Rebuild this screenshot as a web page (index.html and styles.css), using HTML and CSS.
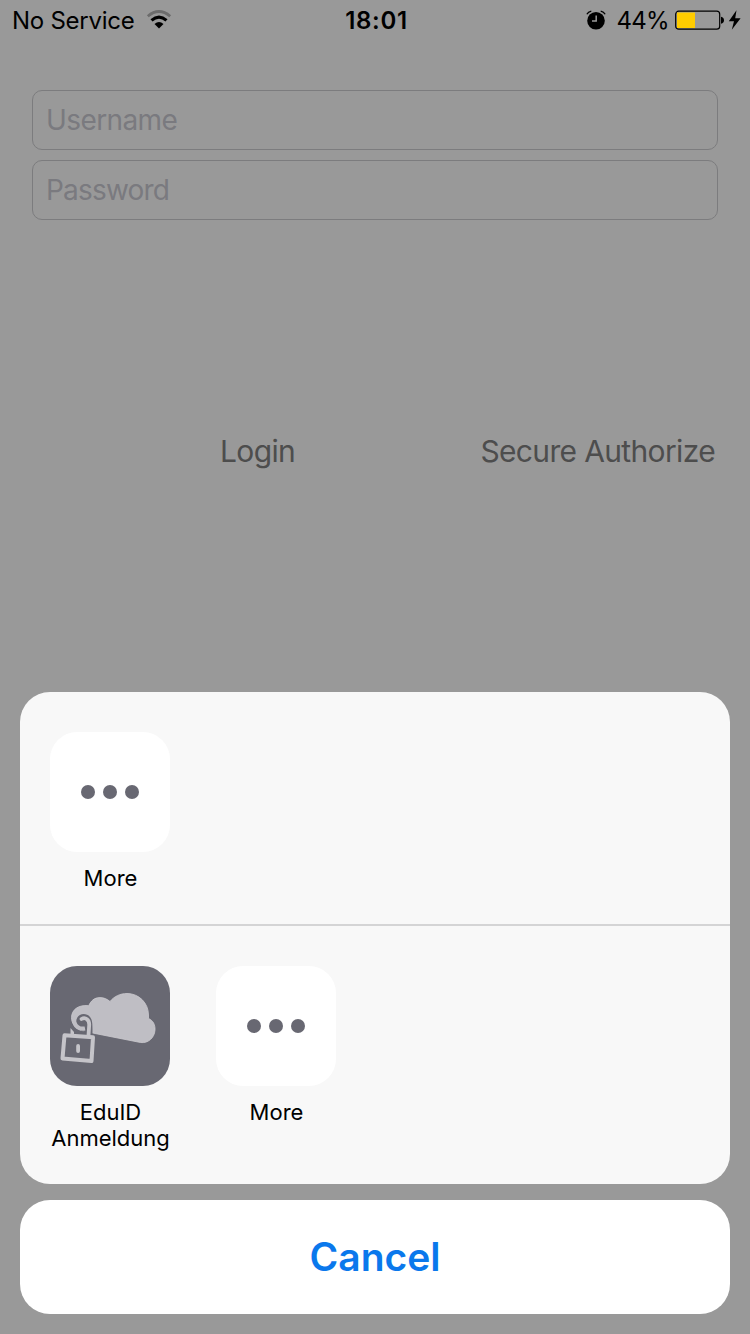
FILE: index.html
```html
<!DOCTYPE html>
<html lang="en">
<head>
<meta charset="utf-8">
<title>Share</title>
<link rel="stylesheet" href="styles.css">
</head>
<body>
<header class="status">
  <div class="status-left">
    <span class="carrier">No Service</span>
    <svg class="wifi" width="26" height="20" viewBox="0 0 26 20">
      <path d="M1.8 6.2Q13 -3.2 24.2 6.2" fill="none" stroke="#6c6c6c" stroke-width="2.8"/>
      <path d="M5.5 10.4Q13 4 20.5 10.4" fill="none" stroke="#000" stroke-width="3.2"/>
      <path d="M8.5 14Q13 10 17.5 14L13 18.6Z"/>
    </svg>
  </div>
  <span class="time">18:01</span>
  <div class="status-right">
    <svg class="alarm" width="20" height="20" viewBox="0 0 20 20">
      <circle cx="10" cy="10.7" r="8.8"/>
      <path d="M.9 4.3Q2.2 1.7 5.3 1.1M19.1 4.3Q17.8 1.7 14.7 1.1" fill="none" stroke="#000" stroke-width="1.4"/>
      <path d="M10.2 5.5V11H6" fill="none" stroke="#999" stroke-width="1.5"/>
    </svg>
    <span class="percent">44%</span>
    <svg class="battery" width="50" height="20" viewBox="0 0 50 20">
      <rect x=".7" y="1.2" width="44" height="18" rx="3" fill="none" stroke="#000" stroke-width="1.2"/>
      <path d="M2 2.5H20V18H2Z" fill="#fc0"/>
      <path d="M46 6.8Q49 7.5 49 10.3T46 13.8Z"/>
    </svg>
    <svg class="bolt" width="13" height="20" viewBox="0 0 13 20"><path d="M8.5 .3L.8 11.3H6L3.8 19.8L12.6 8.2H7.2Z"/></svg>
  </div>
</header>
<main class="form">
  <div class="field"><span class="username">Username</span></div>
  <div class="field"><span class="password">Password</span></div>
  <div class="actions"><span class="login">Login</span><span class="authorize">Secure Authorize</span></div>
</main>
<section class="sheet">
  <div class="row row-top">
    <div class="item">
      <div class="tile"><i class="dot"></i><i class="dot"></i><i class="dot"></i></div>
      <span class="label">More</span>
    </div>
  </div>
  <div class="row">
    <div class="item">
      <svg class="app" width="120" height="120" viewBox="0 0 120 120">
        <!-- cloud -->
        <path d="M38.7 39.7C41 35 44 31.6 50 31.6C54 31.6 57 33 60 35.5C64 30.5 70 27.5 77 27.5C89 27.5 98.5 37 98.5 49V52.5C103 54.5 105.3 58.5 105 64C104.5 72 98 77.500 90.5 76.5L45 67.5L34 65C25 63.5 21.5 57 21.5 51.700C21.5 44 28 38.5 38.7 39.7Z" fill="#bfbec4" stroke="#cbcacf" stroke-width=".8"/>
        <!-- spiral cut around the shackle -->
        <path d="M35.300 70V66.2C29 65 25.5 58.5 26.5 53.5C28 47.5 36 46.3 40 51C42.5 54 42.7 58 42.4 70Z" fill="#686872"/>
        <path d="M24.500 57C26.500 61.500 30.500 63.300 35 62.500" fill="none" stroke="#bfbec4" stroke-width="4.200"/>
        <path d="M31.500 53C35.5 50.500 39.5 54 39.2 59L38.5 69.5" fill="none" stroke="#c5c4c9" stroke-width="3.8" stroke-linecap="round"/>
        <path d="M20.5 69V62L24 66V69Z" fill="#c5c4c9"/>
        <!-- lock body -->
        <path d="M14.5 69.3L43 71.3L41.5 95L12.5 92.5Z" fill="#686872" stroke="#c5c4c9" stroke-width="4" stroke-linejoin="round"/>
        <rect x="26.2" y="78" width="3.8" height="9" rx="1.9" fill="#c5c4c9"/>
      </svg>
      <span class="label">EduID<br>Anmeldung</span>
    </div>
    <div class="item">
      <div class="tile"><i class="dot"></i><i class="dot"></i><i class="dot"></i></div>
      <span class="label">More</span>
    </div>
  </div>
</section>
<div class="cancel"><span class="cancel-text">Cancel</span></div>
</body>
</html>
```
FILE: styles.css
```css
* { box-sizing: border-box; }
body { margin: 0; width: 750px; height: 1334px; overflow: hidden; display: flex; flex-direction: column; background: #999; color: #000; font-family: Inter, "Liberation Sans", sans-serif; }
svg { display: block; flex: none; }
span { white-space: nowrap; }
.status { display: grid; grid-template-columns: 1fr auto 1fr; height: 40px; padding: 0 10px 0 12px; align-items: center; font-size: 24px; line-height: 42px; }
.status-left, .status-right { display: flex; align-items: center; height: 42px; }
.status-right { justify-content: flex-end; }
.status svg { margin-bottom: 2px; }
.carrier { letter-spacing: -0.25px; }
.wifi { margin-left: 11px; }
.time { padding-left: 1px; font-weight: 600; letter-spacing: 0.7px; }
.percent { margin: 0 6px 0 12px; letter-spacing: -0.7px; }
.alarm { margin-right: -1px; }
.bolt { margin-left: 3px; margin-right: -1px; }
.form { height: 652px; padding: 50px 32px 0; }
.field { height: 60px; margin-bottom: 10px; padding-left: 13px; border: 1px solid #7c7c7e; border-radius: 10px; color: #7a7a7f; font-size: 28px; line-height: 58px; }
.username { letter-spacing: -0.6px; }
.password { letter-spacing: -0.8px; }
.actions { display: flex; justify-content: space-between; padding: 202px 3px 0 188px; color: #4d4d4d; font-size: 30px; line-height: 38px; letter-spacing: -0.65px; }
.sheet { height: 492px; margin: 0 20px; border-radius: 30px; background: #f8f8f8; }
.row { display: flex; gap: 46px; padding: 40px 30px 0; }
.row-top { height: 234px; border-bottom: 2px solid #d4d4d5; }
.item { width: 120px; display: flex; flex-direction: column; align-items: center; }
.tile { width: 120px; height: 120px; border-radius: 27px; background: #fff; display: flex; justify-content: center; align-items: center; gap: 8px; }
.app { border-radius: 27px; background: #686872; }
.dot { width: 14px; height: 14px; border-radius: 50%; background: #686872; }
.label { padding: 13px 0 0 1px; text-align: center; font-size: 22px; line-height: 26px; }
.cancel { height: 114px; margin: 16px 20px 0; border-radius: 30px; background: #fff; color: #0a78ec; font-size: 39px; font-weight: 600; line-height: 114px; text-align: center; }
```
